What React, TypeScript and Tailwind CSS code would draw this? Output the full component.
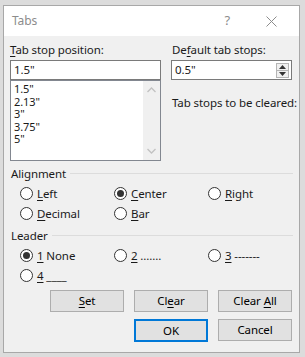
import React from 'react';

const font = { fontFamily: '"Noto Sans", "Open Sans", sans-serif' };

function Radio({ checked, children }: { checked?: boolean; children: React.ReactNode }) {
  return (
    <div className="flex items-center gap-[4px]">
      <span className="flex h-[13px] w-[13px] items-center justify-center rounded-full border border-[#333] bg-white">
        {checked && <span className="h-[7px] w-[7px] rounded-full bg-[#333]" />}
      </span>
      <span className="leading-[15px]">{children}</span>
    </div>
  );
}

function Btn({ children, primary }: { children: React.ReactNode; primary?: boolean }) {
  return (
    <button
      className={
        primary
          ? 'flex h-[23px] w-[74px] items-center justify-center border-2 border-[#0078d7] bg-[#e1e1e1] text-[11.5px] text-black'
          : 'flex h-[22px] w-[74px] items-center justify-center border border-[#adadad] bg-[#e1e1e1] text-[11.5px] text-black'
      }
    >
      <span>{children}</span>
    </button>
  );
}

function Group({ title }: { title: string }) {
  return (
    <div className="flex items-center gap-[4px] pl-[1px]">
      <span className="leading-[15px]">{title}</span>
      <span className="h-px flex-1 bg-[#dcdcdc]" />
    </div>
  );
}

const u = 'underline underline-offset-[2px] decoration-1';

export default function App() {
  return (
    <div
      className="h-[357px] w-[305px] bg-[#dcdcdc] pl-[3px] pt-[5px] text-[11.5px] tracking-[-0.1px] text-[#1a1a1a]"
      style={font}
    >
      <div className="flex h-[348px] w-[297px] flex-col border border-[#a8a8a8] bg-[#f0f0f0]">
        {/* title bar */}
        <div className="flex h-[30px] items-center bg-white pl-[8px] text-[#8c8c8c]">
          <span className="flex-1 text-[12px]">Tabs</span>
          <span className="mr-[36px] text-[13px]">?</span>
          <svg width="11" height="11" viewBox="0 0 11 11" className="mr-[22px]">
            <path d="M0.5 0.5 L10.5 10.5 M10.5 0.5 L0.5 10.5" stroke="#8c8c8c" strokeWidth="1" />
          </svg>
        </div>

        <div className="flex flex-col px-[6px] pt-[6px]">
          <div className="flex gap-[10px]">
            {/* left column */}
            <div className="flex w-[151px] flex-col">
              <div className="leading-[15px]">
                <span className={u}>T</span>ab stop position:
              </div>
              <div className="mt-[3px] flex h-[20px] items-center border border-[#7a7a7a] bg-white pl-[3px]">1.5"</div>
              <div className="flex h-[81px] border border-[#828790] bg-white">
                <div className="flex flex-1 flex-col pl-[3px] pt-[2px] text-[11px] leading-[12.5px]">
                  <span>1.5"</span>
                  <span>2.13"</span>
                  <span>3"</span>
                  <span>3.75"</span>
                  <span>5"</span>
                </div>
                <div className="flex w-[17px] flex-col items-center justify-between bg-[#f0f0f0] py-[6px]">
                  <svg width="9" height="6" viewBox="0 0 9 6">
                    <path d="M0.5 5 L4.5 1 L8.5 5" fill="none" stroke="#c2c2c2" strokeWidth="1.3" />
                  </svg>
                  <svg width="9" height="6" viewBox="0 0 9 6">
                    <path d="M0.5 1 L4.5 5 L8.5 1" fill="none" stroke="#c2c2c2" strokeWidth="1.3" />
                  </svg>
                </div>
              </div>
            </div>

            {/* right column */}
            <div className="flex w-[121px] flex-col">
              <div className="pl-[1px] leading-[15px]">
                De<span className={u}>f</span>ault tab stops:
              </div>
              <div className="mt-[3px] flex h-[20px] items-center border border-[#7a7a7a] bg-white pl-[3px] pr-[2px]">
                <span className="flex-1">0.5"</span>
                <div className="flex h-[15px] w-[13px] flex-col border border-[#b5b5b5] bg-[#f0f0f0]">
                  <div className="flex flex-1 items-center justify-center border-b border-[#b5b5b5]">
                    <svg width="7" height="4" viewBox="0 0 7 4">
                      <path d="M0 4 L3.5 0 L7 4 Z" fill="#333" />
                    </svg>
                  </div>
                  <div className="flex flex-1 items-center justify-center">
                    <svg width="7" height="4" viewBox="0 0 7 4">
                      <path d="M0 0 L3.5 4 L7 0 Z" fill="#333" />
                    </svg>
                  </div>
                </div>
              </div>
              <div className="mt-[15px] whitespace-nowrap pl-[1px] leading-[15px]">Tab stops to be cleared:</div>
            </div>
          </div>

          {/* alignment */}
          <div className="mt-[5px]">
            <Group title="Alignment" />
          </div>
          <div className="mt-[5px] grid grid-cols-[94px_94px_1fr] gap-y-[5px] pl-[10px]">
            <Radio>
              <span className={u}>L</span>eft
            </Radio>
            <Radio checked>
              <span className={u}>C</span>enter
            </Radio>
            <Radio>
              <span className={u}>R</span>ight
            </Radio>
            <Radio>
              <span className={u}>D</span>ecimal
            </Radio>
            <Radio>
              <span className={u}>B</span>ar
            </Radio>
          </div>

          {/* leader */}
          <div className="mt-[7px]">
            <Group title="Leader" />
          </div>
          <div className="mt-[5px] grid grid-cols-[94px_94px_1fr] gap-y-[5px] pl-[10px]">
            <Radio checked>
              <span className={u}>1</span> None
            </Radio>
            <Radio>
              <span className={u}>2</span> .......
            </Radio>
            <Radio>
              <span className={u}>3</span> -------
            </Radio>
            <Radio>
              <span className={u}>4</span> ____
            </Radio>
          </div>

          {/* buttons */}
          <div className="mt-[7px] flex justify-end gap-[10px] pr-[1px]">
            <Btn>
              <span className={u}>S</span>et
            </Btn>
            <Btn>
              Cl<span className={u}>e</span>ar
            </Btn>
            <Btn>
              Clear <span className={u}>A</span>ll
            </Btn>
          </div>
          <div className="mt-[7px] flex justify-end gap-[10px] pr-[1px]">
            <Btn primary>OK</Btn>
            <Btn>Cancel</Btn>
          </div>
        </div>
      </div>
    </div>
  );
}
